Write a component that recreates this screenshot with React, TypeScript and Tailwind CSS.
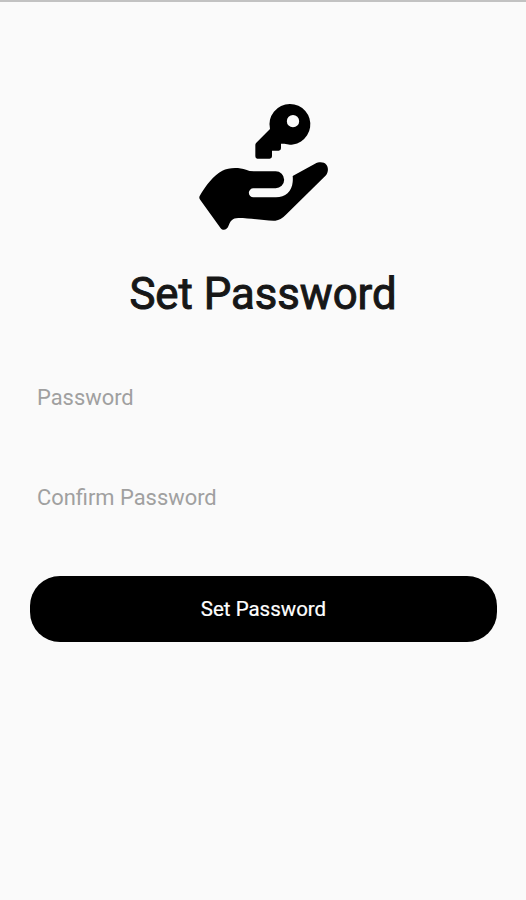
const fields = [
  { id: 'password', label: 'Password' },
  { id: 'confirm-password', label: 'Confirm Password' },
]

const HandKeyIcon = () => (
  <svg
    viewBox="0 0 435 435"
    className="mr-[2px] h-[145px] w-[145px]"
    fill="currentColor"
    aria-hidden="true"
  >
    <path
      fillRule="evenodd"
      d="M300 27a61 61 0 1 1-17 119.600L273 146V160Q273 167 266 167H246V184Q246 191 239 191H202Q196 191 196 184V149Q196 146 199 143L240 102A61 61 0 0 1 300 27ZM309 60a18.500 18.500 0 1 0 0 37a18.500 18.500 0 0 0 0-37Z"
    />
    <path d="M29 303C48 270 70 242 97 227C116 217 147 217 168 224Q178 229 192 229H257A25.500 25.500 0 0 1 257 280H190A13.500 13.500 0 0 0 190 307H258C286 307 306 289 308 261Q309 252 308 243L375 206C387 200 402 200 409 209C416 218 415 231 408 241L290 357Q272 376 256 377C222 378 185 369 145 369C127 369 121 378 115 394C111 405 99 408 92 400L31 315Q26 309 29 303Z" />
  </svg>
)

const App = () => (
  <main className="flex h-[900px] w-full flex-col border-t-2 border-[#c2c2c2] bg-[#fafafa] px-[30px] pt-[93px] font-['Roboto',sans-serif]">
    <div className="flex justify-center text-black">
      <HandKeyIcon />
    </div>

    <h1 className="mt-[26px] text-center text-[43.700px] font-normal leading-[56px] text-[#171717] [-webkit-text-stroke:1px_#171717]">
      Set Password
    </h1>

    <form className="mt-[45px] flex flex-col">
      {fields.map((field) => (
        <input
          key={field.id}
          id={field.id}
          type="password"
          aria-label={field.label}
          placeholder={field.label}
          className="mb-[40px] h-[60px] w-full bg-transparent px-[7px] text-[21.900px] text-black outline-none placeholder:text-[#a0a0a0]"
        />
      ))}

      <button
        type="button"
        className="mt-[9px] h-[65.500px] w-[467px] rounded-[30px] bg-black pt-[2px] text-[20.500px] text-white [-webkit-text-stroke:0.2px_#fff]"
      >
        Set Password
      </button>
    </form>
  </main>
)

export default App
